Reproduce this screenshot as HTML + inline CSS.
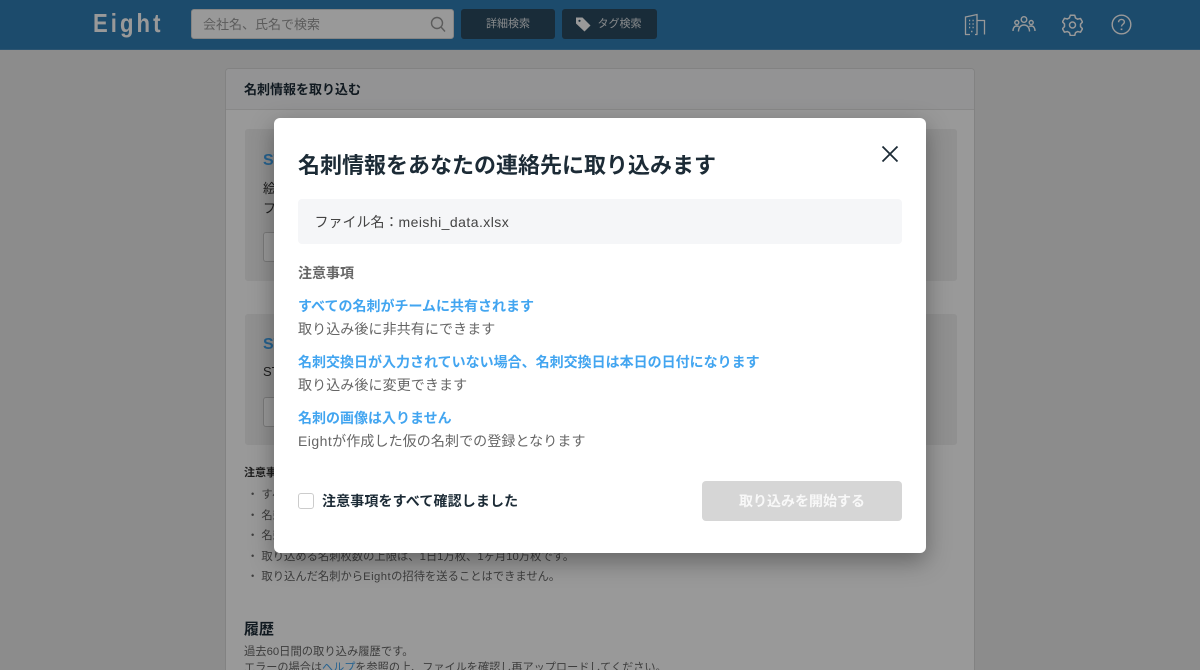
<!DOCTYPE html>
<html lang="ja"><head><meta charset="utf-8"><title>Eight</title>
<style>
*{box-sizing:border-box;margin:0;padding:0}
html,body{width:1200px;height:670px;overflow:hidden;background:#e9e9e9}
body{position:relative;font-family:"Liberation Sans","Noto Sans CJK JP",sans-serif;color:#333}
.a{position:absolute;white-space:nowrap}
#hd{left:0;top:0;width:1200px;height:50px;background:#307db4;border-bottom:1px solid #4a8dbd}
#logo{left:93px;top:5px;font-size:26px;font-weight:bold;letter-spacing:3.6px;color:#fff;line-height:36px;transform:scaleX(.85);transform-origin:left center}
#srch{left:191px;top:9px;width:263px;height:30px;background:#fff;border-radius:3px;border:1px solid #ddd}
.btn{top:9px;height:30px;background:#2b4a60;border-radius:3px;color:rgba(255,255,255,.85);font-size:11px;line-height:30px;text-align:center}
#card{left:225px;top:68px;width:750px;height:602px;background:#fff;border:1px solid #d9d9d9;border-bottom:none;border-radius:4px 4px 0 0;overflow:hidden}
.st{left:19px;width:712px;background:#f0f0f0;border-radius:3px}
.w{left:37px;width:112px;height:30px;border:1px solid #ccc;border-radius:3px;background:#fff}
#ov{left:0;top:0;width:1200px;height:670px;background:rgba(0,0,0,.4)}
#m{left:274px;top:118px;width:652px;height:435px;background:#fff;border-radius:6px;box-shadow:0 8px 24px rgba(0,0,0,.35)}
.b{color:#42a5f0;font-size:14px;font-weight:bold;left:24px;line-height:20px}
.g{color:#666;font-size:14px;left:24px;line-height:20px;letter-spacing:.1px}
.li{left:21px;font-size:11.3px;color:#666;line-height:16px}
.lt{letter-spacing:.45px}
</style></head><body>
<div class="a" id="hd"></div>
<div class="a" id="logo">Eight</div>
<div class="a" id="srch"><span class="a" style="left:11px;top:6px;font-size:13px;line-height:18px;color:#999">会社名、氏名で検索</span>
<svg class="a" style="left:238px;top:6px" width="18" height="18" viewBox="0 0 18 18" fill="none" stroke="#999" stroke-width="1.4"><circle cx="7" cy="7" r="5.500"/><path d="M11 11L15 15.500"/></svg></div>
<div class="a btn" style="left:461px;width:94px">詳細検索</div>
<div class="a btn" style="left:562px;width:95px;padding-left:20px">タグ検索</div>
<svg class="a" style="left:575px;top:16px" width="17" height="17" viewBox="0 0 17 17"><path d="M1 1.500h6.500l8 8-6 6-8.500-8z" fill="#fff"/><circle cx="4.500" cy="4.800" r="1.100" fill="#2b4a60"/></svg>

<svg class="a" style="left:964px;top:13px" width="22" height="23" viewBox="0 0 22 23" fill="none" stroke="#fff" stroke-width="1.300"><path d="M1.500 21.500V4L13 1.500V21.500M13 7.500h7.500v14M1 21.500h5M11 21.500h2.500"/><path d="M5 7.500h1.200M8.500 7.500h1.200M5 11h1.200M8.500 11h1.200M5 14.500h1.200M8.500 14.500h1.200M7 18.500h1.500" stroke-width="1.500"/></svg>
<svg class="a" style="left:1012px;top:15px" width="24" height="19" viewBox="0 0 24 19" fill="none" stroke="#fff" stroke-width="1.400"><circle cx="12" cy="4.500" r="2.800"/><circle cx="4.800" cy="7.500" r="2"/><circle cx="19.200" cy="7.500" r="2"/><path d="M6.500 16.500c0-4 2.200-6.500 5.500-6.500s5.500 2.500 5.500 6.500M1 16c0-3 1.300-5 3.800-5 .8 0 1.500.2 2 .6M23 16c0-3-1.300-5-3.800-5-.8 0-1.500.2-2 .6"/></svg>
<svg class="a" style="left:1062px;top:14px" width="21" height="22" viewBox="0 0 21 22" fill="none" stroke="#fff" stroke-width="1.500" stroke-linejoin="round"><path d="M8.300 1.200h4.400l.8 2.800 2.100 1.200 2.900-.7 2 3.500-2 2.100v2.500l2 2.100-2 3.500-2.900-.7-2.100 1.200-.8 2.800H8.300l-.8-2.800-2.100-1.200-2.900.7-2-3.500 2-2.100V9.900l-2-2.100 2-3.500 2.900.7 2.100-1.200z"/><circle cx="10.500" cy="11" r="3"/></svg>
<svg class="a" style="left:1111px;top:14px" width="21" height="21" viewBox="0 0 21 21" fill="none" stroke="#fff" stroke-width="1.400"><circle cx="10.500" cy="10.500" r="9.300"/><path d="M7.600 8.200c0-1.700 1.300-2.800 2.900-2.800s2.900 1.100 2.900 2.600c0 2.200-2.900 2.300-2.900 4.500"/><path d="M10.500 14.500v1.600" stroke-width="1.700"/></svg>

<div class="a" id="card">
<div class="a" style="left:0;top:0;width:748px;height:41px;background:#f5f6f7;border-bottom:1px solid #e3e3e3"></div>
<div class="a" style="left:18px;top:12px;font-size:13px;font-weight:bold;line-height:18px;color:#1c2b36">名刺情報を取り込む</div>
<div class="a st" style="top:60px;height:152px"></div>
<div class="a" style="left:37px;top:81px;font-size:16px;font-weight:bold;color:#42a5f0;line-height:22px">STEP</div>
<div class="a" style="left:37px;top:110px;font-size:13px;line-height:20px">絵<br>フ</div>
<div class="a w" style="top:163px"></div>
<div class="a st" style="top:245px;height:131px"></div>
<div class="a" style="left:37px;top:265px;font-size:16px;font-weight:bold;color:#42a5f0;line-height:22px">STEP</div>
<div class="a" style="left:37px;top:293px;font-size:13px;line-height:20px">ST</div>
<div class="a w" style="top:328px"></div>
<div class="a" style="left:18px;top:396px;font-size:11px;font-weight:bold;line-height:16px">注意事項</div>
<div class="a li" style="top:418px">・ すべての</div>
<div class="a li" style="top:439px">・ 名刺交換</div>
<div class="a li" style="top:459px">・ 名刺の画像</div>
<div class="a li" style="top:480px">・ 取り込める名刺枚数の上限は、1日1万枚、1ヶ月10万枚です。</div>
<div class="a li" style="top:500px">・ 取り込んだ名刺から<span class="lt">Eight</span>の招待を送ることはできません。</div>
<div class="a" style="left:18px;top:550px;font-size:15px;font-weight:bold;line-height:22px;color:#1c2b36">履歴</div>
<div class="a" style="left:18px;top:575px;font-size:11.300px;line-height:16px;color:#666">過去60日間の取り込み履歴です。</div>
<div class="a" style="left:18px;top:591px;font-size:11.150px;line-height:16px;color:#666">エラーの場合は<span style="color:#42a5f0">ヘルプ</span>を参照の上、ファイルを確認し再アップロードしてください。</div>
</div>
<div class="a" id="ov"></div>

<div class="a" id="m">
<div class="a" style="left:24px;top:33px;font-size:22px;font-weight:bold;line-height:30px;color:#1c2b36">名刺情報をあなたの連絡先に取り込みます</div>
<svg class="a" style="left:606px;top:26px" width="20" height="20" viewBox="0 0 20 20" fill="none" stroke="#1c2b36" stroke-width="1.800"><path d="M2.500 2.500L17.500 17.500M17.500 2.500L2.500 17.500"/></svg>
<div class="a" style="left:24px;top:81px;width:604px;height:45px;background:#f5f6f8;border-radius:4px"></div>
<div class="a" style="left:40.500px;top:94px;font-size:14px;line-height:20px;color:#444">ファイル名：<span class="lt">meishi_data.xlsx</span></div>
<div class="a" style="left:24px;top:145px;font-size:14px;font-weight:bold;line-height:20px;color:#666">注意事項</div>
<div class="a b" style="top:178px">すべての名刺がチームに共有されます</div>
<div class="a g" style="top:201px">取り込み後に非共有にできます</div>
<div class="a b" style="top:234px">名刺交換日が入力されていない場合、名刺交換日は本日の日付になります</div>
<div class="a g" style="top:257px">取り込み後に変更できます</div>
<div class="a b" style="top:290px">名刺の画像は入りません</div>
<div class="a g" style="top:313px"><span class="lt">Eight</span>が作成した仮の名刺での登録となります</div>
<div class="a" style="left:24px;top:375px;width:16px;height:16px;border:1px solid #ccc;border-radius:3px;background:#fff"></div>
<div class="a" style="left:48px;top:373px;font-size:14px;font-weight:bold;line-height:20px;color:#1c2b36;letter-spacing:.13px">注意事項をすべて確認しました</div>
<div class="a" style="left:428px;top:363px;width:200px;height:40px;background:#d6d6d6;border-radius:4px;color:#fff;font-size:14px;font-weight:bold;line-height:40px;text-align:center"><span style="opacity:.85">取り込みを開始する</span></div>
</div>
</body></html>
